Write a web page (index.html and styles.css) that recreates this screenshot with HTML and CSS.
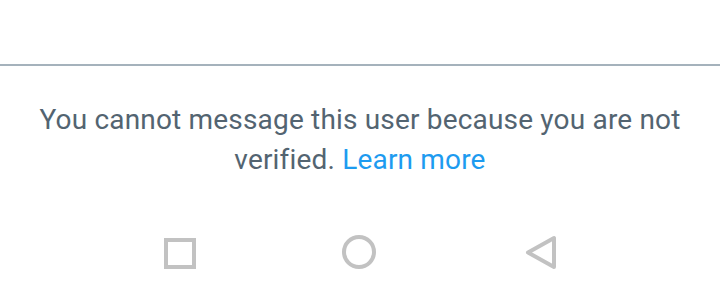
FILE: index.html
```html
<!DOCTYPE html>
<html>
<head>
<meta charset="utf-8">
<link rel="stylesheet" href="styles.css">
</head>
<body>
<div class="screen">
  <div class="top"></div>
  <div class="divider"></div>
  <p class="notice">You cannot message this user because you are not verified. <a class="link" href="#">Learn more</a></p>
  <nav class="navbar">
    <svg class="nav-icon" width="40" height="40" viewBox="0 0 40 40"><rect x="6" y="6" width="28" height="27" fill="none" stroke="#c2c2c2" stroke-width="4"/></svg>
    <svg class="nav-icon" width="40" height="40" viewBox="0 0 40 40"><circle cx="19" cy="18" r="15" fill="none" stroke="#c2c2c2" stroke-width="4"/></svg>
    <svg class="nav-icon" width="40" height="40" viewBox="0 0 40 40"><path d="M34 4 L34 33 L8 18.5 Z" fill="none" stroke="#c2c2c2" stroke-width="4" stroke-linejoin="round"/></svg>
  </nav>
</div>
</body>
</html>
```
FILE: styles.css
```css
html, body {
  margin: 0;
  padding: 0;
  background: #ffffff;
}
.screen {
  width: 720px;
  height: 303px;
  display: flex;
  flex-direction: column;
  font-family: Roboto, "Noto Sans", sans-serif;
}
.top {
  height: 64px;
}
.divider {
  height: 2px;
  background: #a5b2bc;
}
.notice {
  margin: 34px 0 0 0;
  padding: 0 20px;
  text-align: center;
  font-size: 28px;
  letter-spacing: 0.18px;
  line-height: 40px;
  color: #536471;
}
.link {
  color: #1d9bf0;
  text-decoration: none;
}
.navbar {
  margin-top: 54px;
  display: flex;
  justify-content: center;
  gap: 140px;
}
.nav-icon {
  display: block;
}
```
